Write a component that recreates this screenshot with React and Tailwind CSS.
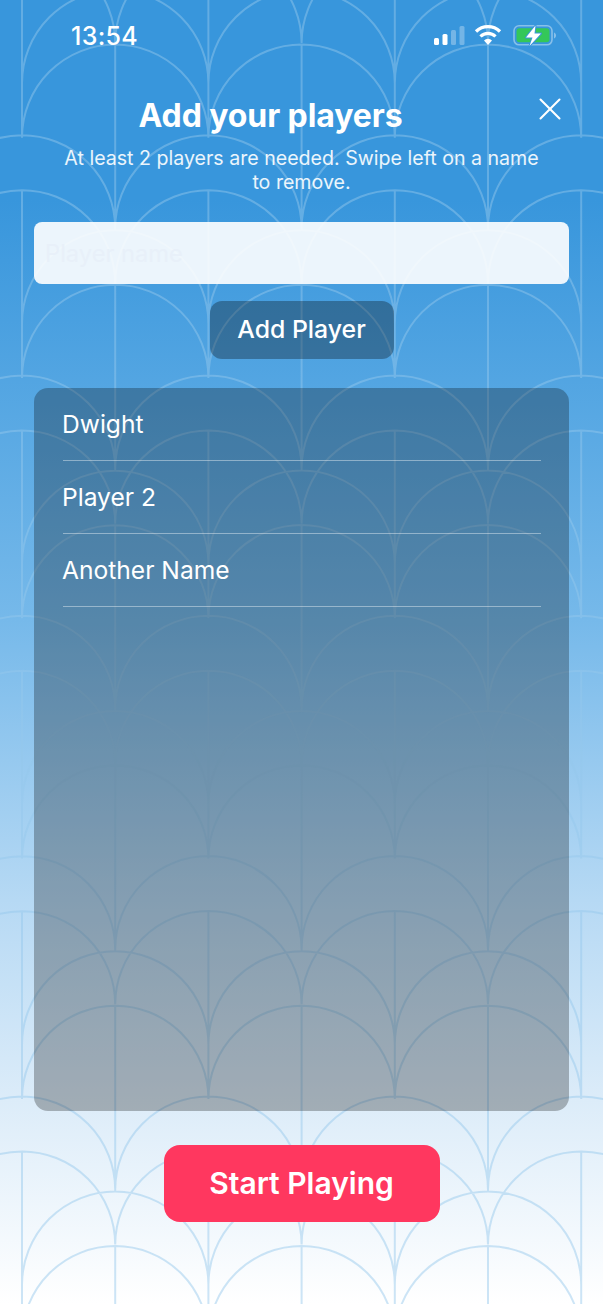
import { X } from 'lucide-react';

const PLAYERS = ['Dwight', 'Player 2', 'Another Name'];

// arches sit on two alternating columns, the whole thing repeats every 240.3px
const COL = 93.2;
const PERIOD = 240.3;

const buildPattern = () => {
  let d = '';
  for (let c = 0; c < 7; c++) {
    const x = 22 + c * COL;
    const even = c % 2 === 0;
    const tops = even ? [135.2, 190.2] : [-10, 44.5];
    for (let k = -1; k < 6; k++) {
      tops.forEach((top) => {
        const y = top + k * PERIOD;
        d += `M${x - COL} ${y + COL}A${COL} ${COL} 0 0 1 ${x + COL} ${y + COL}`;
      });
      const start = tops[1] + k * PERIOD;
      d += `M${x} ${start}V${start + 186}`;
    }
  }
  return d;
};

const Background = () => (
  <svg className="absolute inset-0" width="603" height="1304" fill="none" aria-hidden="true">
    <path d={buildPattern()} stroke="rgb(149,200,235)" strokeOpacity="0.47" strokeWidth="2" />
  </svg>
);

const StatusIcons = () => (
  <svg width="126" height="24" viewBox="0 0 126 24" fill="none" className="overflow-visible" aria-hidden="true">
    <rect x="1" y="13" width="5" height="7" rx="1.5" fill="#fff" />
    <rect x="9.5" y="9" width="5" height="11" rx="1.5" fill="#fff" />
    <rect x="18" y="5" width="5" height="15" rx="1.5" fill="#fff" fillOpacity="0.3" />
    <rect x="26.5" y="1" width="5" height="19" rx="1.5" fill="#fff" fillOpacity="0.3" />
    <path d="M43 6.500A17 17 0 0 1 67 6.500" stroke="#fff" strokeWidth="3.2" />
    <path d="M47.500 11.500A10.500 10.500 0 0 1 62.500 11.500" stroke="#fff" strokeWidth="3.200" />
    <path d="M51 15.500A5.600 5.600 0 0 1 59 15.500L55 20z" fill="#fff" />
    <rect x="81" y="0.800" width="38" height="19" rx="5" stroke="#fff" strokeOpacity="0.4" strokeWidth="1.600" />
    <rect x="83.500" y="3.300" width="33" height="14" rx="3" fill="#34c759" />
    <path d="M121 7.500c1.300.5 2 1.700 2 3s-.7 2.500-2 3z" fill="#fff" fillOpacity="0.4" />
    <path d="M102.500 0.500 93 12.500h6.500L96.500 21 108 8.500h-6.500z" fill="#fff" stroke="#3896dc" strokeWidth="2" strokeLinejoin="round" paintOrder="stroke" />
  </svg>
);

export default function App() {
  return (
    <div className="relative w-[603px] h-[1304px] overflow-hidden bg-[linear-gradient(180deg,#3896dc_0px,#3896dc_200px,#76b9ea_620px,#b6d9f4_900px,#dcecf9_1100px,#ffffff_1304px)] font-['Inter',sans-serif] text-white">
      <Background />

      <div className="relative flex flex-col h-full">
        <div className="flex items-start justify-between pt-[24px] pl-[71px] pr-[44px] h-[96px]">
          <span className="text-[25px] leading-[25px] font-medium tracking-[0.3px]">13:54</span>
          <div className="pt-[1px]">
            <StatusIcons />
          </div>
        </div>

        <div className="flex items-center px-[34px] h-[40px]">
          <h1 className="flex-1 text-center text-[32px] leading-[40px] font-bold tracking-[-0.1px]">Add your players</h1>
          <button className="w-[62px] flex justify-end -mt-[14px]">
            <X size={38} strokeWidth={1.3} />
          </button>
        </div>

        <p className="mt-[10px] px-[60px] text-center text-[19.6px] leading-[24px] text-white/90">
          At least 2 players are needed. Swipe left on a name to remove.
        </p>

        <input
          placeholder="Player name"
          className="mt-[28px] mx-[34px] h-[62px] shrink-0 rounded-[8px] bg-white/90 px-[11px] text-[23.7px] placeholder:text-[#e8f0f9] outline-none"
        />

        <button className="self-center mt-[17px] w-[184px] h-[58px] shrink-0 rounded-[12px] bg-black/30 text-[24.8px] font-medium">
          Add Player
        </button>

        <ul className="mt-[29px] mx-[34px] h-[723px] shrink-0 rounded-[14px] bg-black/[.27] pl-[29px] pr-[28px]">
          {PLAYERS.map((name) => (
            <li key={name} className="h-[73px] flex items-center border-b border-white/40 text-[24.6px] leading-[30px] -indent-[1px]">
              {name}
            </li>
          ))}
        </ul>

        <button className="self-center mt-[34px] w-[276px] h-[77px] shrink-0 rounded-[16px] bg-[#ff375f] text-[30px] font-semibold">
          Start Playing
        </button>
      </div>
    </div>
  );
}
